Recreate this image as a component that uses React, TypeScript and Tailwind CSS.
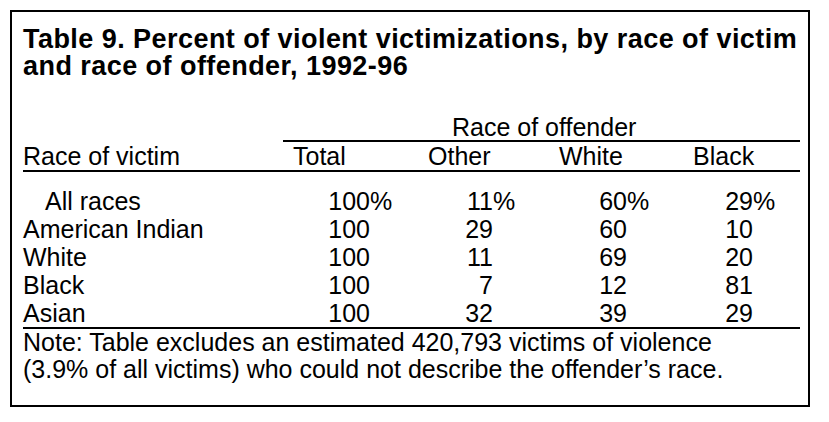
import React from "react";

const rows = [
  { label: "All races", indent: true, pct: true, v: ["100", "11", "60", "29"] },
  { label: "American Indian", v: ["100", "29", "60", "10"] },
  { label: "White", v: ["100", "11", "69", "20"] },
  { label: "Black", v: ["100", "7", "12", "81"] },
  { label: "Asian", v: ["100", "32", "39", "29"] },
];

// number box widths so right edges line up like the print layout
const numW = ["w-[87px]", "w-[93px]", "w-[97px]", "w-[93px]"];

export default function App() {
  return (
    <div
      className="w-[829px] h-[422px] bg-white text-black pt-[10px] pl-[10px]"
      style={{ fontFamily: '"Liberation Sans", Arial, sans-serif' }}
    >
      <div className="w-[800px] h-[397px] border-2 border-black pl-[11px] pr-[8px] pt-[14px]">
        <h1 className="font-bold text-[27px] leading-[27px] tracking-[0.45px] whitespace-nowrap">
          <div>Table 9. Percent of violent victimizations, by race of victim</div>
          <div>and race of offender, 1992-96</div>
        </h1>

        <div className="text-[25px] mt-[34px] whitespace-nowrap">
          <div className="grid grid-cols-[260px_117px_130px_130px_140px]">
            <div />
            <div className="col-span-4 border-b-2 border-black leading-[26px] pl-[169px]">
              Race of offender
            </div>
          </div>
          <div className="grid grid-cols-[260px_117px_130px_130px_140px] border-b-2 border-black leading-[28px]">
            <div>Race of victim</div>
            <div className="pl-[10px]">Total</div>
            <div className="pl-[28px]">Other</div>
            <div className="pl-[29px]">White</div>
            <div className="pl-[33px]">Black</div>
          </div>

          <div className="pt-[15px] border-b-2 border-black">
            {rows.map((r) => (
              <div
                key={r.label}
                className="grid grid-cols-[260px_117px_130px_130px_140px] leading-[28px]"
              >
                <div className={r.indent ? "pl-[22px]" : ""}>{r.label}</div>
                {r.v.map((n, i) => (
                  <div key={i} className="flex">
                    <span className={`${numW[i]} text-right`}>{n}</span>
                    {r.pct && <span>%</span>}
                  </div>
                ))}
              </div>
            ))}
          </div>

          <p className="leading-[27px]">
            Note: Table excludes an estimated 420,793 victims of violence
            <br />
            (3.9% of all victims) who could not describe the offender’s race.
          </p>
        </div>
      </div>
    </div>
  );
}
